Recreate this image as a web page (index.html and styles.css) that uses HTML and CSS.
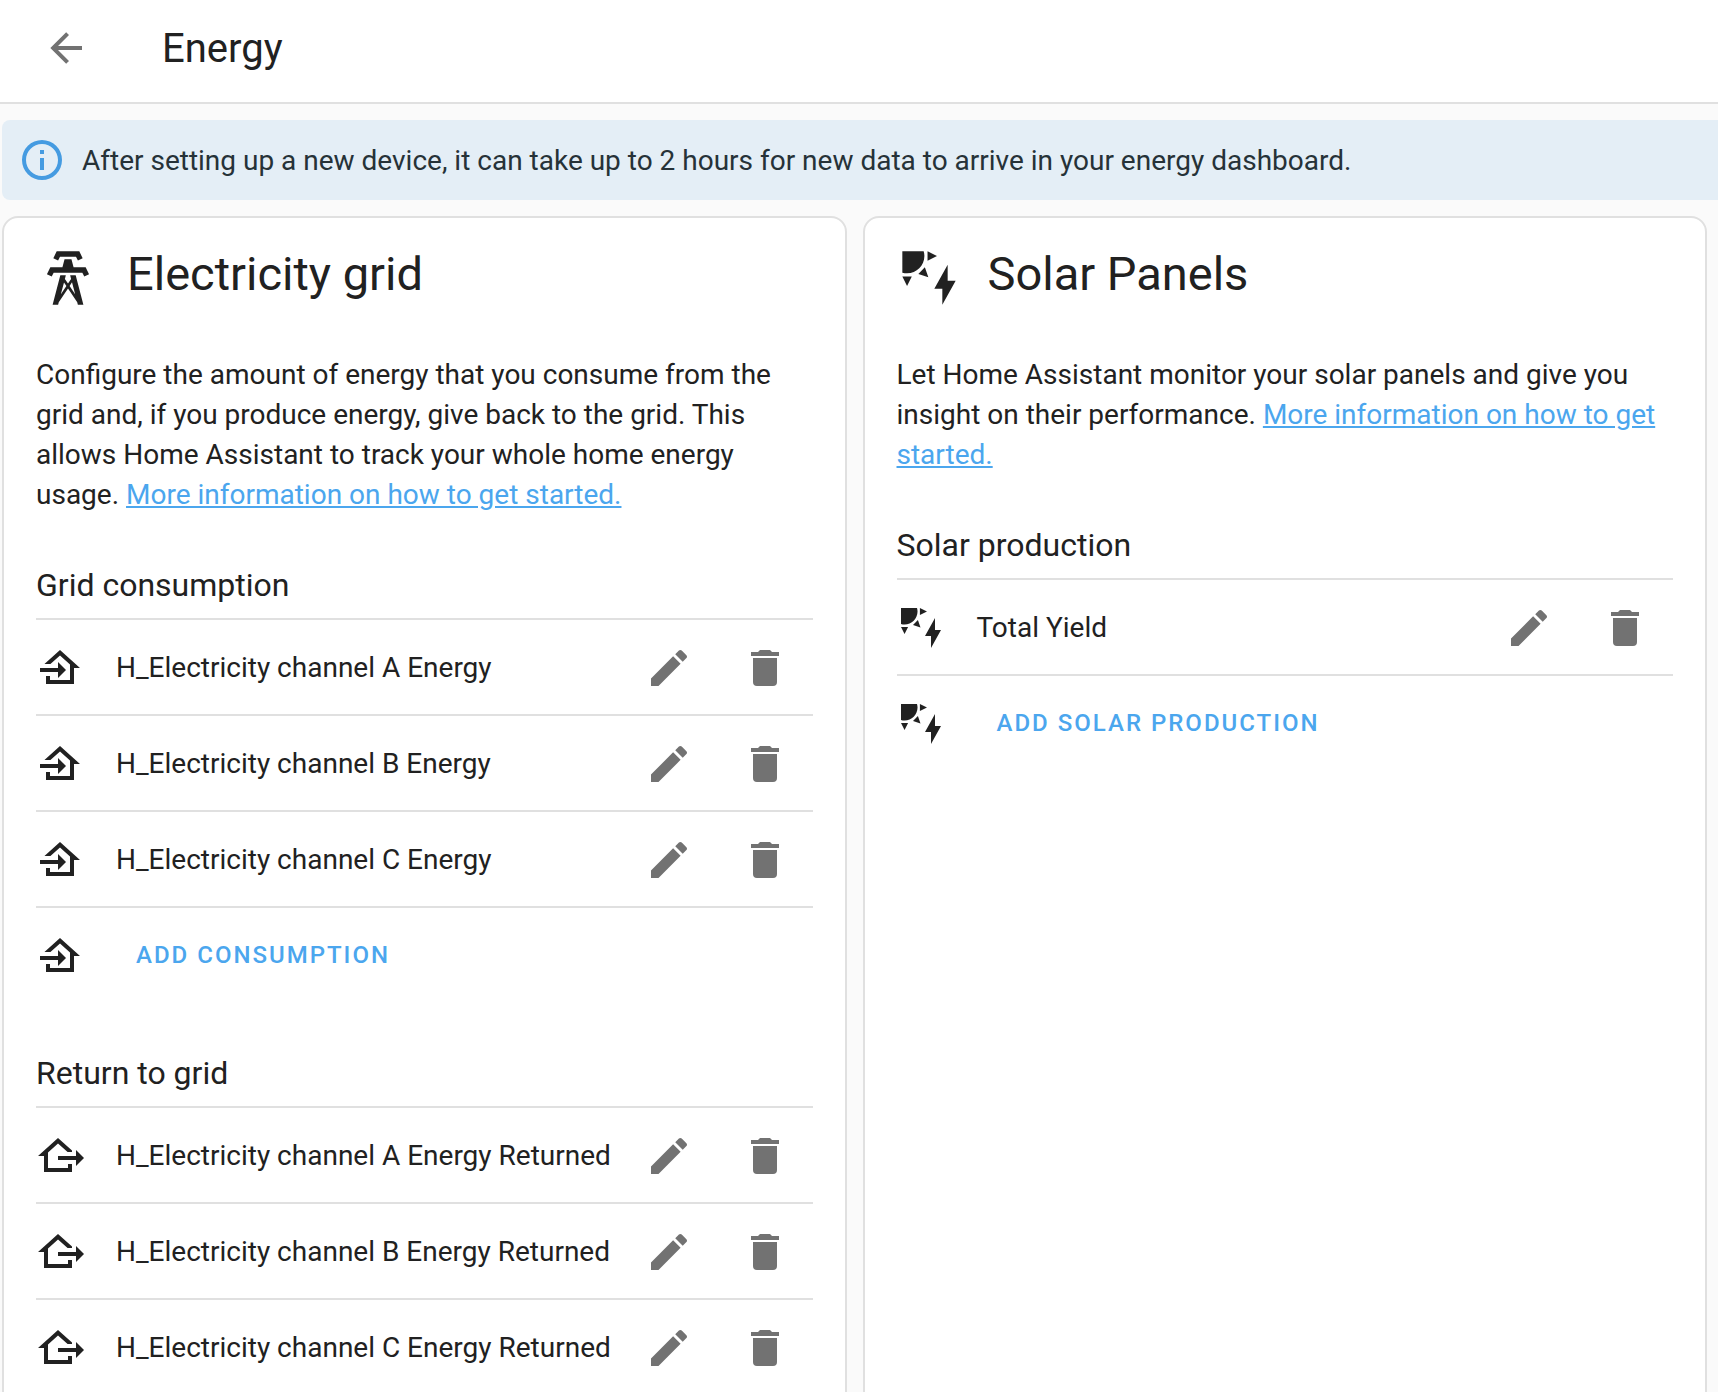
FILE: index.html
```html
<!DOCTYPE html>
<html lang="en">
<head>
<meta charset="utf-8">
<meta name="viewport" content="width=device-width, initial-scale=1">
<title>Energy</title>
<link rel="stylesheet" href="styles.css">
</head>
<body>
<svg class="sprite" aria-hidden="true">
  <symbol id="back" viewBox="0 0 24 24"><path d="M20,11V13H8L13.5,18.5L12.08,19.92L4.16,12L12.08,4.08L13.5,5.5L8,11H20Z"/></symbol>
  <symbol id="info" viewBox="0 0 24 24"><path d="M11,9H13V7H11M12,20C7.59,20 4,16.41 4,12C4,7.59 7.59,4 12,4C16.41,4 20,7.59 20,12C20,16.41 16.41,20 12,20M12,2A10,10 0 0,0 2,12A10,10 0 0,0 12,22A10,10 0 0,0 22,12A10,10 0 0,0 12,2M11,17H13V11H11V17Z"/></symbol>
  <symbol id="tower" viewBox="0 0 24 24"><path d="M8.28,5.45L6.5,4.55L7.76,2H16.23L17.5,4.55L15.72,5.44L15,4H9L8.28,5.45M18.62,8H14.09L13.3,5H10.7L9.91,8H5.38L4.1,10.55L5.89,11.44L6.62,10H17.38L18.1,11.45L19.89,10.56L18.62,8M17.77,22H15.7L15.46,21.1L12,15.9L8.53,21.1L8.3,22H6.23L9.12,11H11.19L10.83,12.35L12,14.1L13.16,12.35L12.81,11H14.88L17.77,22M11.4,15L10.5,13.65L9.32,18.13L11.4,15M14.68,18.12L13.5,13.64L12.6,15L14.68,18.12Z"/></symbol>
  <symbol id="solar" viewBox="0 0 24 24"><path d="M11.45,2V5.55L15,3.77L11.45,2M10.45,8L8,10.46L11.75,11.71L10.45,8M2,11.45L3.77,15L5.55,11.45H2M10,2H2V10C2.57,10.17 3.17,10.25 3.77,10.25C7.35,10.26 10.26,7.35 10.27,3.75C10.26,3.16 10.17,2.57 10,2M17,22V16H14L19,7V13H22L17,22Z"/></symbol>
  <symbol id="import" viewBox="0 0 24 24"><path d="M15,13L11,17V14H2V12H11V9L15,13M5,20V16H7V18H17V10.19L12,5.69L7.21,10H4.22L12,3L22,12H19V20H5Z"/></symbol>
  <symbol id="export" viewBox="0 0 24 24"><path d="M24,13L20,17V14H11V12H20V9L24,13M4,20V12H1L11,3L18,9.3V10H15.79L11,5.69L6,10.19V18H16V16H18V20H4Z"/></symbol>
  <symbol id="pencil" viewBox="0 0 24 24"><path d="M20.71,7.04C21.1,6.65 21.1,6 20.71,5.63L18.37,3.29C18,2.9 17.35,2.9 16.96,3.29L15.12,5.12L18.87,8.87M3,17.25V21H6.75L17.81,9.93L14.06,6.18L3,17.25Z"/></symbol>
  <symbol id="delete" viewBox="0 0 24 24"><path d="M19,4H15.5L14.5,3H9.5L8.5,4H5V6H19M6,19A2,2 0 0,0 8,21H16A2,2 0 0,0 18,19V7H6V19Z"/></symbol>
</svg>

<header class="toolbar">
  <button class="icon-button" type="button" aria-label="Back"><svg class="icon"><use href="#back"/></svg></button>
  <h1 class="title">Energy</h1>
</header>

<main class="content">
  <div class="alert" role="status">
    <svg class="icon alert-icon"><use href="#info"/></svg>
    <p class="alert-text">After setting up a new device, it can take up to 2 hours for new data to arrive in your energy dashboard.</p>
  </div>

  <div class="cards">
    <section class="card">
      <header class="card-header">
        <svg class="icon icon-large"><use href="#tower"/></svg>
        <h2 class="card-title">Electricity grid</h2>
      </header>
      <p class="description">Configure the amount of energy that you consume from the grid and, if you produce energy, give back to the grid. This allows Home Assistant to track your whole home energy usage. <a class="link" href="#grid">More information on how to get started.</a></p>

      <h3 class="list-title">Grid consumption</h3>
      <ul class="list">
        <li class="row">
          <svg class="icon"><use href="#import"/></svg>
          <span class="name">H_Electricity channel A Energy</span>
          <button class="icon-button" type="button" aria-label="Edit"><svg class="icon"><use href="#pencil"/></svg></button>
          <button class="icon-button" type="button" aria-label="Delete"><svg class="icon"><use href="#delete"/></svg></button>
        </li>
        <li class="row">
          <svg class="icon"><use href="#import"/></svg>
          <span class="name">H_Electricity channel B Energy</span>
          <button class="icon-button" type="button" aria-label="Edit"><svg class="icon"><use href="#pencil"/></svg></button>
          <button class="icon-button" type="button" aria-label="Delete"><svg class="icon"><use href="#delete"/></svg></button>
        </li>
        <li class="row">
          <svg class="icon"><use href="#import"/></svg>
          <span class="name">H_Electricity channel C Energy</span>
          <button class="icon-button" type="button" aria-label="Edit"><svg class="icon"><use href="#pencil"/></svg></button>
          <button class="icon-button" type="button" aria-label="Delete"><svg class="icon"><use href="#delete"/></svg></button>
        </li>
        <li class="row row-add">
          <svg class="icon"><use href="#import"/></svg>
          <button class="text-button" type="button">Add consumption</button>
        </li>
      </ul>

      <h3 class="list-title">Return to grid</h3>
      <ul class="list">
        <li class="row">
          <svg class="icon"><use href="#export"/></svg>
          <span class="name">H_Electricity channel A Energy Returned</span>
          <button class="icon-button" type="button" aria-label="Edit"><svg class="icon"><use href="#pencil"/></svg></button>
          <button class="icon-button" type="button" aria-label="Delete"><svg class="icon"><use href="#delete"/></svg></button>
        </li>
        <li class="row">
          <svg class="icon"><use href="#export"/></svg>
          <span class="name">H_Electricity channel B Energy Returned</span>
          <button class="icon-button" type="button" aria-label="Edit"><svg class="icon"><use href="#pencil"/></svg></button>
          <button class="icon-button" type="button" aria-label="Delete"><svg class="icon"><use href="#delete"/></svg></button>
        </li>
        <li class="row">
          <svg class="icon"><use href="#export"/></svg>
          <span class="name">H_Electricity channel C Energy Returned</span>
          <button class="icon-button" type="button" aria-label="Edit"><svg class="icon"><use href="#pencil"/></svg></button>
          <button class="icon-button" type="button" aria-label="Delete"><svg class="icon"><use href="#delete"/></svg></button>
        </li>
      </ul>
    </section>

    <section class="card">
      <header class="card-header">
        <svg class="icon icon-large"><use href="#solar"/></svg>
        <h2 class="card-title">Solar Panels</h2>
      </header>
      <p class="description">Let Home Assistant monitor your solar panels and give you insight on their performance. <a class="link" href="#solar-panels">More information on how to get started.</a></p>

      <h3 class="list-title">Solar production</h3>
      <ul class="list">
        <li class="row">
          <svg class="icon"><use href="#solar"/></svg>
          <span class="name">Total Yield</span>
          <button class="icon-button" type="button" aria-label="Edit"><svg class="icon"><use href="#pencil"/></svg></button>
          <button class="icon-button" type="button" aria-label="Delete"><svg class="icon"><use href="#delete"/></svg></button>
        </li>
        <li class="row row-add">
          <svg class="icon"><use href="#solar"/></svg>
          <button class="text-button" type="button">Add solar production</button>
        </li>
      </ul>
    </section>
  </div>
</main>
</body>
</html>
```
FILE: styles.css
```css
:root {
  --text: #212121;
  --muted: #727272;
  --divider: #e0e0e0;
  --accent: #4ba6ee;
}

* {
  box-sizing: border-box;
}

body {
  display: flex;
  flex-direction: column;
  height: 100vh;
  margin: 0;
  overflow: hidden;
  background: #fafafa;
  color: var(--text);
  font: 400 28px/40px Roboto, sans-serif;
}

h1, h2, h3, p, ul {
  margin: 0;
  padding: 0;
  font-weight: 400;
}

button {
  padding: 0;
  border: 0;
  background: none;
  font: inherit;
  cursor: pointer;
}

.sprite {
  display: none;
}

.icon {
  display: block;
  flex: none;
  width: 48px;
  height: 48px;
  fill: currentColor;
}

.icon-large {
  width: 64px;
  height: 64px;
}

.icon-button {
  display: flex;
  flex: none;
  align-items: center;
  justify-content: center;
  width: 96px;
  color: var(--muted);
}

.toolbar {
  display: flex;
  flex: none;
  align-items: center;
  gap: 48px;
  padding: 24px 18px 30px;
  border-bottom: 2px solid var(--divider);
  background: #fff;
}

.title {
  padding-top: 2px;
  font-size: 40px;
  line-height: 44px;
}

.content {
  display: flex;
  flex: 1;
  flex-direction: column;
  gap: 16px;
  min-height: 0;
  padding: 16px 0 0 2px;
  overflow: hidden;
}

.alert {
  display: flex;
  flex: none;
  align-items: center;
  gap: 16px;
  padding: 16px;
  border-radius: 8px 0 0 8px;
  background: #e4eef6;
  color: #263238;
}

.alert-icon {
  color: #459be1;
}

.alert-text {
  padding-top: 2px;
}

.cards {
  display: grid;
  grid-template-columns: repeat(2, minmax(0, 1fr));
  gap: 16px;
  padding-right: 11px;
}

.card {
  padding: 28px 32px 32px;
  border: 2px solid var(--divider);
  border-radius: 16px;
  background: #fff;
}

.card-header {
  display: flex;
  align-items: flex-start;
  gap: 27px;
  margin-bottom: 45px;
}

.card-title {
  font-size: 47px;
  line-height: 56px;
}

.link {
  color: var(--accent);
}

.list-title {
  margin-top: 50px;
  padding-bottom: 13px;
  border-bottom: 2px solid var(--divider);
  font-size: 32px;
  line-height: 40px;
}

.list {
  list-style: none;
}

.row {
  display: flex;
  align-items: center;
  min-height: 96px;
  padding-top: 2px;
  border-bottom: 2px solid var(--divider);
}

.row-add {
  min-height: 95px;
  padding-bottom: 1px;
  border-bottom: 0;
}

.name {
  flex: 1;
  min-width: 0;
  padding-left: 32px;
}

.text-button {
  padding: 0 16px 2px;
  margin-left: 36px;
  color: var(--accent);
  font-size: 24px;
  font-weight: 500;
  letter-spacing: 2px;
  text-transform: uppercase;
}
```
